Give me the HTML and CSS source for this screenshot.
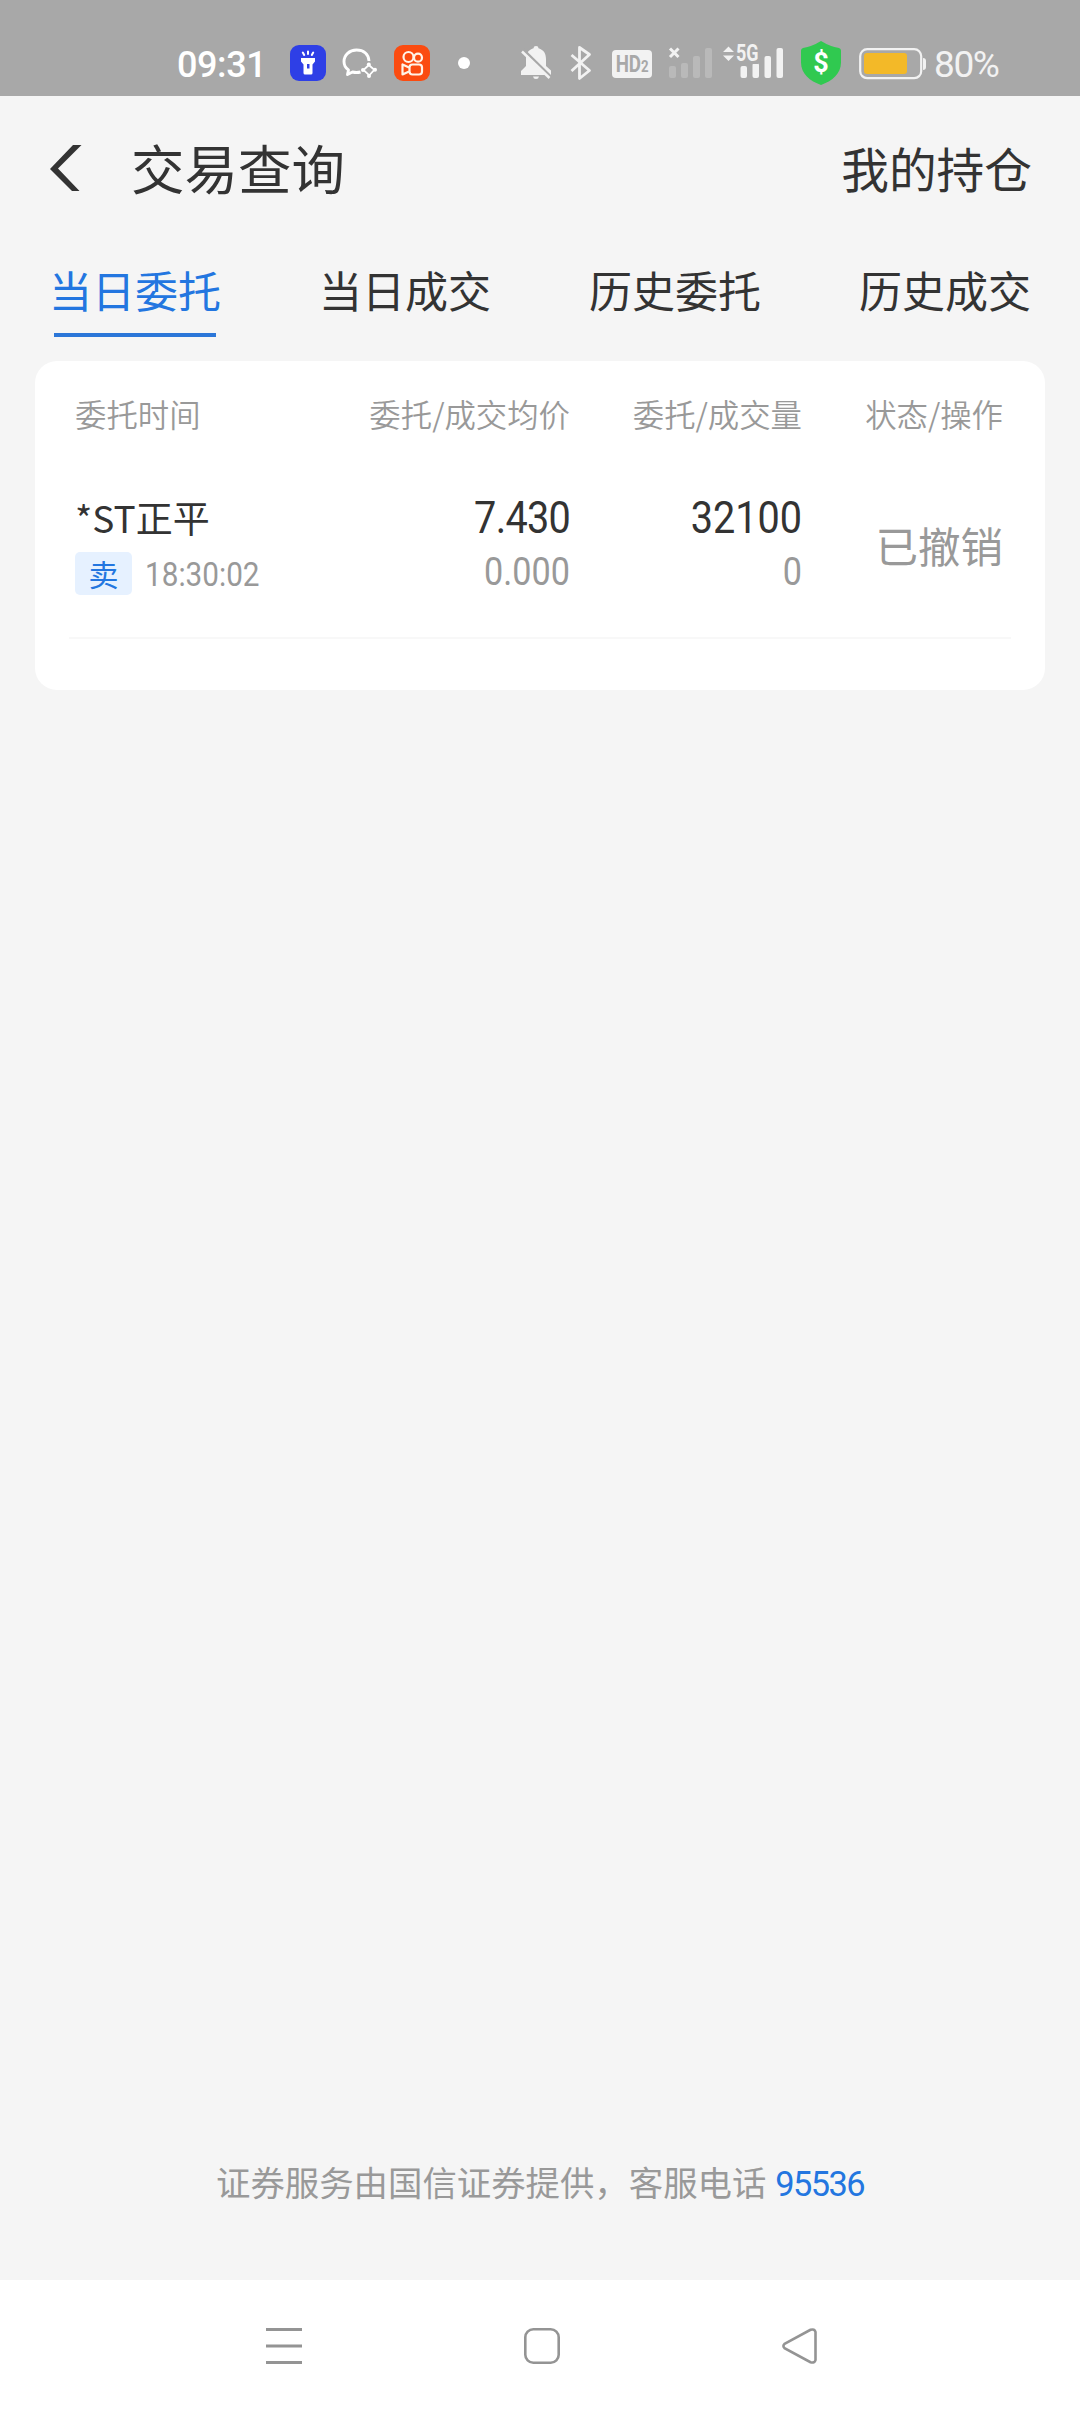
FILE: index.html
```html
<!DOCTYPE html>
<html lang="zh-CN">
<head>
    <meta charset="UTF-8">
    <meta name="viewport" content="width=device-width, initial-scale=1.0">
    <title>交易查询</title>
    <link rel="stylesheet" href="styles.css">
</head>
<body>
    <div class="status-bar">
        <span class="clock">09:31</span>
        <svg class="app-icon" width="36" height="36" viewBox="0 0 36 36">
            <rect width="36" height="36" rx="9" fill="#2e3fe6"/>
            <path d="M11 13h14v3.500l-2.500 3V28q0 1.500-1.500 1.500h-6q-1.500 0-1.500-1.500v-8.500L11 16.500z" fill="#fff"/>
            <rect x="17" y="19" width="2.500" height="4.500" fill="#2e3fe6"/>
            <path d="M18 6.500v2.500M12.800 7.500l1.400 2.500M23.200 7.500l-1.400 2.500" stroke="#fff" stroke-width="2" stroke-linecap="round"/>
        </svg>
        <svg class="app-icon" width="36" height="36" viewBox="0 0 36 36" fill="none" stroke="#fff">
            <path d="M27 16C26.500 9 21.500 5 14.500 5 7.500 5 2 10 2 16.500c0 4 1.500 6.500 4.500 8.500L5.500 29.500l5-2.500c3 .8 5 .8 8 0" stroke-width="2.900" stroke-linejoin="round"/>
            <path d="M26.800 20l5.500 4.800-5 5.500-5.800-5.300z" stroke-width="1.800"/>
            <g fill="#fff" stroke="none"><circle cx="26.800" cy="19.500" r="2"/><circle cx="33" cy="24.700" r="2"/><circle cx="27" cy="31" r="2"/><circle cx="21" cy="25" r="2"/></g>
        </svg>
        <svg class="app-icon" width="36" height="36" viewBox="0 0 36 36" fill="none" stroke="#fff3e8" stroke-width="2.200">
            <rect width="36" height="36" rx="9" fill="#fb4b10" stroke="none"/>
            <circle cx="14.500" cy="12" r="5"/>
            <circle cx="24" cy="12.700" r="4"/>
            <rect x="15.500" y="19.500" width="12.500" height="10" rx="3"/>
            <path d="M15 22.500l-6.500-3v10l6.500-3" stroke-linejoin="round"/>
        </svg>
        <span class="dot"></span>
        <svg class="bell" width="32" height="36" viewBox="0 0 32 36">
            <path d="M16 1q2.500 0 2.500 2.300C24 5 26 9 26 14v7l5 4.500V30H1v-4l5-5v-7C6 9 8 5 13.500 3.300Q13.500 1 16 1zM13 31.500h6q-.5 2.500-3 2.500t-3-2.500z" fill="#f2f2f2"/>
            <path d="M3 4.500L32 33" stroke="#a8a8a8" stroke-width="3"/>
            <path d="M2 6.500L29.500 33" stroke="#f2f2f2" stroke-width="2.500"/>
        </svg>
        <svg class="bluetooth" width="22" height="36" viewBox="0 0 22 36" fill="none" stroke="#f2f2f2" stroke-width="2.800" stroke-linejoin="round">
            <path d="M1.500 10L19.500 25.500 9.500 33.500V2.500L19.500 9.500 1.500 26"/>
        </svg>
        <span class="hd"><span>HD<small>2</small></span></span>
        <svg class="signal-off" width="44" height="36" viewBox="0 0 44 36">
            <path d="M2 3.500l8.500 8.500M10.500 3.500L2 12" stroke="#f2f2f2" stroke-width="3"/>
            <g fill="#b9b9b9"><rect x="1" y="21" width="7" height="12" rx="2"/><rect x="13" y="18" width="7" height="15" rx="2"/><rect x="25" y="11" width="7" height="22" rx="2"/><rect x="37" y="3" width="7" height="30" rx="2"/></g>
        </svg>
        <span class="signal">
            <svg width="62" height="36" viewBox="0 0 62 36" fill="#f2f2f2">
                <path d="M1 7l5.500-5.500L12 7zM1 10.500h11L6.500 16z"/>
                <rect x="18.500" y="21" width="6.500" height="12" rx="2"/><rect x="30.500" y="18" width="6.500" height="15" rx="2"/><rect x="42.500" y="11" width="6.500" height="22" rx="2"/><rect x="54.500" y="3" width="6.500" height="30" rx="2"/>
            </svg>
            <b>5G</b>
        </span>
        <span class="shield">
            <svg width="40" height="44" viewBox="0 0 40 44">
                <path d="M20 0q9 5.500 18 7 2 .5 2 2.500v12C40 33 31 40 20 44 9 40 0 33 0 21.500v-12Q0 7.500 2 7q9-1.500 18-7z" fill="#30c950"/>
            </svg>
            <b>$</b>
        </span>
        <svg class="battery" width="68" height="32" viewBox="0 0 68 32">
            <rect x="1.200" y="1.200" width="61" height="29" rx="7" fill="none" stroke="#f2f2f2" stroke-width="2.200"/>
            <rect x="5" y="5" width="43" height="21" rx="3" fill="#f3b928"/>
            <path d="M64 10q3 0 3 3v6q0 3-3 3z" fill="#f2f2f2"/>
        </svg>
        <span class="percent">80%</span>
    </div>

    <header class="header">
        <svg class="back" width="32" height="46" viewBox="0 0 32 46"><path d="M23 0h8.500L8 23.500 29.500 46H22L0 24z" fill="#333"/></svg>
        <h1>交易查询</h1>
        <a class="holdings">我的持仓</a>
    </header>

    <nav class="tabs">
        <a class="tab active">当日委托</a>
        <a class="tab">当日成交</a>
        <a class="tab">历史委托</a>
        <a class="tab">历史成交</a>
    </nav>

    <section class="card">
        <div class="row head">
            <span>委托时间</span>
            <span>委托/成交均价</span>
            <span>委托/成交量</span>
            <span>状态/操作</span>
        </div>
        <div class="row order">
            <div class="stock">
                <div class="name"><span>*ST</span>正平</div>
                <div class="meta"><span class="tag">卖</span><span class="time">18:30:02</span></div>
            </div>
            <div class="nums"><div class="main price">7.430</div><div class="sub">0.000</div></div>
            <div class="nums"><div class="main">32100</div><div class="sub">0</div></div>
            <div class="state">已撤销</div>
        </div>
    </section>

    <footer class="service">证券服务由国信证券提供，客服电话<a>95536</a></footer>

    <div class="nav-bar">
        <svg width="36" height="36" viewBox="0 0 36 36" stroke="#949494" stroke-width="3"><path d="M0 1.500h36M0 18h36M0 34.500h36"/></svg>
        <svg width="36" height="36" viewBox="0 0 36 36" fill="none" stroke="#949494" stroke-width="2.600"><rect x="1.300" y="1.300" width="33.400" height="33.400" rx="8"/></svg>
        <svg width="36" height="36" viewBox="0 0 36 36" fill="none" stroke="#949494" stroke-width="2.600"><path d="M2.500 15.800L28.500 1.800Q32.700 .5 33.500 4v28q-.8 3.500-5 2.200L2.500 20.200q-2.200-2.200 0-4.400z"/></svg>
    </div>
</body>
</html>
```

FILE: styles.css
```css
* {
    box-sizing: border-box;
}
body {
    margin: 0;
    height: 2412px;
    display: flex;
    flex-direction: column;
    background: #f5f5f5;
    color: #333;
    font-family: "Noto Sans CJK SC", sans-serif;
}
svg {
    display: block;
    flex-shrink: 0;
    overflow: visible;
}

/* system status bar */
.status-bar {
    height: 96px;
    padding: 30px 0 0 177px;
    display: flex;
    align-items: center;
    background: #a8a8a8;
    color: #f2f2f2;
    font-family: Roboto, sans-serif;
}
.clock {
    width: 97px;
    padding-top: 3px;
    color: #fff;
    font-size: 36px;
    font-weight: 500;
    line-height: 40px;
    letter-spacing: -0.4px;
}
.app-icon {
    margin-left: 16px;
}
.dot {
    width: 12px;
    height: 12px;
    margin-left: 28px;
    border-radius: 50%;
    background: #fff;
}
.bell {
    margin-left: 50px;
}
.bluetooth {
    margin-left: 18px;
}
.hd {
    width: 40px;
    height: 28px;
    margin: 2px 0 0 20px;
    display: flex;
    justify-content: center;
    border-radius: 4px;
    background: #f2f2f2;
    color: #a8a8a8;
    font-size: 24px;
    font-weight: 700;
    line-height: 29px;
    white-space: nowrap;
}
.hd span {
    transform: scaleX(0.78);
}
.hd small {
    font-size: 17px;
}
.signal-off {
    margin-left: 16px;
}
.signal {
    position: relative;
    margin-left: 10px;
}
.signal b {
    position: absolute;
    left: 14px;
    top: -1px;
    padding-bottom: 1px;
    font-size: 23px;
    line-height: 19px;
    background: #a8a8a8;
    transform: scaleX(0.78);
    transform-origin: left;
}
.shield {
    position: relative;
    margin-left: 17px;
}
.shield b {
    position: absolute;
    inset: 0;
    color: #fff;
    font-size: 27px;
    line-height: 44px;
    text-align: center;
}
.battery {
    margin: 1px 0 0 18px;
}
.percent {
    margin-left: 7px;
    padding-top: 3px;
    font-size: 37px;
    line-height: 40px;
    letter-spacing: -1.4px;
}

.header {
    height: 144px;
    padding: 0 48px 0 50px;
    display: flex;
    align-items: center;
}
.header h1 {
    margin: -3px 0 0 49px;
    font-size: 53.5px;
    font-weight: 400;
    line-height: 80px;
}
.holdings {
    margin: -2px 0 0 auto;
    font-size: 47.7px;
}

.tabs {
    height: 121px;
    display: grid;
    grid-template-columns: repeat(4, 1fr);
    justify-items: center;
    align-items: start;
}
.tab {
    height: 97px;
    padding-top: 17px;
    font-size: 43px;
    line-height: 64px;
}
.tab.active {
    color: #2376e0;
}
.tab.active::after {
    content: "";
    display: block;
    width: 162px;
    height: 4px;
    margin: 12px auto 0;
    background: #2b76d8;
}

.card {
    height: 329px;
    margin: 0 35px;
    padding: 0 34px;
    border-radius: 22px;
    background: #fff;
}
.row {
    display: grid;
    grid-template-columns: 220px 275px 232px 201px;
    padding: 0 7px 0 6px;
    text-align: right;
}
.head {
    height: 108px;
    color: #999;
    font-size: 31.4px;
    font-weight: 350;
    line-height: 105px;
    white-space: nowrap;
}
.head span:first-child,
.stock {
    text-align: left;
}
.order {
    height: 170px;
    padding-top: 22px;
    border-bottom: 2px solid #f8f8f8;
}
.name {
    height: 60px;
    font-size: 37px;
    line-height: 52px;
    white-space: nowrap;
}
.meta {
    display: flex;
    align-items: center;
}
.tag {
    width: 57px;
    height: 43px;
    border-radius: 5px;
    background: #e6f1ff;
    color: #2376e0;
    font-size: 30px;
    line-height: 43px;
    text-align: center;
}
.time,
.main,
.sub,
.service a {
    font-family: Roboto, sans-serif;
}
.time {
    margin-left: 13px;
    padding-top: 2px;
    color: #999;
    font-size: 33px;
    line-height: 43px;
    transform: scaleX(0.9);
    transform-origin: left;
}
.main,
.sub {
    transform: scaleX(0.9);
    transform-origin: right;
}
.main {
    font-size: 44px;
    line-height: 54px;
}
.price {
    letter-spacing: -0.8px;
}
.sub {
    color: #999;
    font-size: 38px;
    line-height: 54px;
}
.state {
    color: #999;
    font-size: 42.5px;
    line-height: 108px;
}

.service {
    margin-top: auto;
    height: 124px;
    color: #999;
    font-size: 34.4px;
    line-height: 50px;
    text-align: center;
    white-space: nowrap;
}
.service a {
    display: inline-block;
    margin-left: 9px;
    color: #2376e0;
    letter-spacing: -1.6px;
}

/* system navigation */
.nav-bar {
    height: 132px;
    padding: 0 262px 0 266px;
    display: flex;
    align-items: center;
    justify-content: space-between;
    background: #fff;
}
```
